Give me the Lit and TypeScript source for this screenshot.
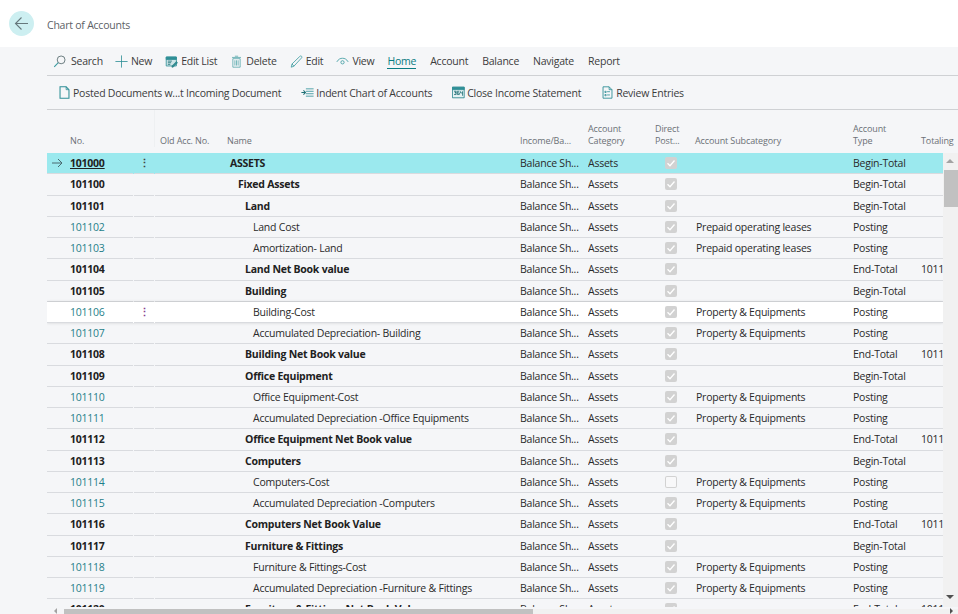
import { css, html, LitElement, svg } from 'lit';
import { customElement } from 'lit/decorators.js';

type Row = {
  no: string;
  name: string;
  level: number;
  type: string;
  sub?: string;
  total?: string;
  unchecked?: boolean;
};

const PROP = 'Property & Equipments';
const LEASE = 'Prepaid operating leases';

const rows: Row[] = [
  { no: '101000', name: 'ASSETS', level: 0, type: 'Begin-Total' },
  { no: '101100', name: 'Fixed Assets', level: 1, type: 'Begin-Total' },
  { no: '101101', name: 'Land', level: 2, type: 'Begin-Total' },
  { no: '101102', name: 'Land Cost', level: 3, type: 'Posting', sub: LEASE },
  { no: '101103', name: 'Amortization- Land', level: 3, type: 'Posting', sub: LEASE },
  { no: '101104', name: 'Land Net Book value', level: 2, type: 'End-Total', total: '1011' },
  { no: '101105', name: 'Building', level: 2, type: 'Begin-Total' },
  { no: '101106', name: 'Building-Cost', level: 3, type: 'Posting', sub: PROP },
  { no: '101107', name: 'Accumulated Depreciation- Building', level: 3, type: 'Posting', sub: PROP },
  { no: '101108', name: 'Building Net Book value', level: 2, type: 'End-Total', total: '1011' },
  { no: '101109', name: 'Office Equipment', level: 2, type: 'Begin-Total' },
  { no: '101110', name: 'Office Equipment-Cost', level: 3, type: 'Posting', sub: PROP },
  { no: '101111', name: 'Accumulated Depreciation -Office Equipments', level: 3, type: 'Posting', sub: PROP },
  { no: '101112', name: 'Office Equipment Net Book value', level: 2, type: 'End-Total', total: '1011' },
  { no: '101113', name: 'Computers', level: 2, type: 'Begin-Total' },
  { no: '101114', name: 'Computers-Cost', level: 3, type: 'Posting', sub: PROP, unchecked: true },
  { no: '101115', name: 'Accumulated Depreciation -Computers', level: 3, type: 'Posting', sub: PROP },
  { no: '101116', name: 'Computers Net Book Value', level: 2, type: 'End-Total', total: '1011' },
  { no: '101117', name: 'Furniture & Fittings', level: 2, type: 'Begin-Total' },
  { no: '101118', name: 'Furniture & Fittings-Cost', level: 3, type: 'Posting', sub: PROP },
  { no: '101119', name: 'Accumulated Depreciation -Furniture & Fittings', level: 3, type: 'Posting', sub: PROP },
  { no: '101120', name: 'Furniture & Fittings Net Book Value', level: 2, type: 'End-Total', total: '1011' },
];

const icon = (body: unknown) =>
  html`<svg class="ico" viewBox="0 0 16 16" fill="none" stroke="#2f8f96" stroke-width="1">${body}</svg>`;

const icons = {
  search: svg`<circle cx="10" cy="6" r="4.800" stroke="#4f6468"/><path d="M6.500 9.500 1.500 14.500" stroke="#3a9a9f" stroke-width="1.300"/>`,
  plus: svg`<path d="M8 .5v15M.5 8h15"/>`,
  editList: svg`<path d="M1.500 2.500h12.500v11H1.500z" fill="#cfe6e8"/><path d="M1.500 2.500h12.500v3H1.500z" fill="#2f8f96"/><path d="M3.500 7.500h5M3.500 9.500h4M3.500 11.500h3" stroke="#1f6f75"/><path d="m8.500 13.500 5.500-5.500 1.500 1.500-5.500 5.500H8.500z" fill="#2f8f96" stroke="#1f6f75" stroke-width=".6"/>`,
  trash: svg`<path d="M3.500 4.500h9v10.500h-9zM2.500 3h11M6 1.500h4M6 6.500v6.500M8 6.500v6.500M10 6.500v6.500" stroke="#5aa9ad"/>`,
  pencil: svg`<path d="M1.500 15 2.500 11 12 1.800c.8-.8 1.600-.8 2.200-.2.600.6.600 1.400-.2 2.200L4.800 13.800z" stroke="#3a9a9f"/><path d="m2.500 11 2.300 2.800" stroke="#3a9a9f"/>`,
  eye: svg`<path d="M1 8.500C3 5 5.500 4 8 4s5 1 7 4.500" stroke="#3a9a9f"/><circle cx="8" cy="9" r="2" stroke="#3a9a9f"/>`,
  doc: svg`<path d="M2.500 1h7.500l3.500 3.500V15H2.500z" stroke="#2f8f96" stroke-width="1.300"/><path d="M10 1v3.500h3.500" stroke="#2f8f96"/>`,
  indent: svg`<path d="M6 3.500h9.500M6 6.500h9.500M6 9.500h9.500M6 12.500h9.500" stroke="#2f8f96"/><path d="M.5 8h4.500M3 5.500 5.500 8 3 10.500" stroke="#1f6f75" stroke-width="1.300"/>`,
  close: svg`<path d="M.5 1.500h14.500v13H.5z" fill="#e6f3f4" stroke="#1f7f86"/><path d="M.5 1.500h14.500v3H.5z" fill="#2f8f96"/><path d="M2.500 6.500h2.500v1.700H3.500h1.500v2.300H2.500M6.500 6.500h2.500M6.500 6.500v4h2.500v-2H6.500M10.500 6.500v2h2.500M13 6.500v5.500" stroke="#1f6f75"/>`,
  review: svg`<path d="M2.500 1h7.500l3.500 3.500V15H2.500z" stroke="#2f8f96" stroke-width="1.100"/><path d="M10 1v3.500h3.500M7.500 7H11M7.500 11H11M4.800 6.500h1.500V8H4.800zM4.800 10.500h1.500V12H4.800z" stroke="#2f8f96"/>`,
};

const check = svg`<path d="M2.500 6.200 5 8.700l4.500-5.200" fill="none" stroke="#fff" stroke-width="1.300"/>`;

@customElement('app-root')
export class AppRoot extends LitElement {
  static styles = css`
    :host {
      display: flex;
      flex-direction: column;
      height: 614px;
      overflow: hidden;
      background: #f5f6f8;
      color: #2a2a2a;
      font-family: 'Open Sans', 'Noto Sans', sans-serif;
      font-size: 10.5px;
      letter-spacing: -0.23px;
    }

    .top {
      height: 47px;
      flex: none;
      background: #fff;
      display: flex;
      align-items: center;
      gap: 13px;
      padding: 0 0 1px 9px;
      box-sizing: border-box;
    }

    .back {
      width: 25px;
      height: 25px;
      border-radius: 50%;
      background: #cdeff1;
      display: flex;
      align-items: center;
      justify-content: center;
    }

    .back svg {
      width: 15px;
      height: 15px;
    }

    .title {
      color: #5c6166;
      padding-top: 4px;
    }

    .main {
      flex: 1;
      min-height: 0;
      display: flex;
      flex-direction: column;
      padding-left: 47px;
    }

    .bar {
      flex: none;
      display: flex;
      align-items: center;
      border-bottom: 1px solid #cfd1d4;
      box-sizing: border-box;
      color: #3c3c3c;
    }

    .bar.one {
      height: 29px;
      padding-left: 6px;
    }

    .bar.two {
      height: 34px;
      padding-left: 11px;
    }

    .act {
      display: flex;
      align-items: center;
      gap: 3px;
      white-space: nowrap;
    }

    .ico {
      width: 13px;
      height: 13px;
      flex: none;
    }

    .one .act {
      margin-right: 13px;
    }

    .one .act.search {
      gap: 5px;
      margin-right: 12px;
    }

    .two .act {
      margin-right: 20px;
      gap: 2px;
    }

    .tab {
      margin-right: 14px;
      line-height: 14px;
    }

    .tab.on {
      color: #0a7c82;
      border-bottom: 1px solid #0a7c82;
    }

    .grid {
      display: grid;
      grid-template-columns: 23px 63px 22px 72px 293px 68px 67px 40px 158px 68px 22px;
    }

    .head {
      flex: none;
      height: 43px;
      box-sizing: border-box;
      color: #6b7076;
      font-size: 9px;
      letter-spacing: -0.12px;
      line-height: 12px;
      align-items: end;
      padding-bottom: 6px;
      margin-right: 15px;
    }

    .head > div {
      white-space: nowrap;
    }

    .head .old {
      padding-left: 5px;
      box-shadow: -1px 0 0 #eef0f2;
      align-self: stretch;
      display: flex;
      align-items: flex-end;
    }

    .body {
      flex: 1;
      min-height: 0;
      display: flex;
    }

    .rows {
      flex: 1;
      min-width: 0;
      overflow: hidden;
    }

    .row {
      height: 21.25px;
    }

    .row > div {
      border-bottom: 1px solid #d9dbdf;
      box-sizing: border-box;
      display: flex;
      align-items: center;
      overflow: hidden;
      white-space: nowrap;
      min-width: 0;
    }

    .row .more {
      margin: 0 1px;
      justify-content: center;
      font-weight: 700;
      color: #444;
    }

    .row .name {
      padding-left: 3px;
    }

    .row .sub {
      padding-left: 1px;
    }

    .row .no {
      color: #1f7f8a;
    }

    .row.bold .no,
    .row.bold .name {
      font-weight: 700;
      color: #212121;
    }

    .row.sel {
      background: #9be9ee;
    }

    .row.sel .no {
      text-decoration: underline;
    }

    .row.hover {
      background: #fff;
      box-shadow: 0 0 3px rgba(0, 0, 0, 0.15);
      position: relative;
    }

    .row.hover .more {
      color: #8a3f8f;
    }

    .indent {
      flex: none;
    }

    .arrow svg {
      width: 12px;
      height: 12px;
      margin-left: 4px;
    }

    .chk {
      padding-left: 10px;
    }

    .box {
      width: 12px;
      height: 12px;
      border-radius: 2px;
      background: #d2d2d2;
      display: block;
    }

    .box.off {
      background: #f8f8f9;
      box-shadow: inset 0 0 0 1px #d2d2d2;
    }

    .vbar {
      width: 15px;
      flex: none;
      background: #f1f1f1;
      position: relative;
    }

    .thumb {
      position: absolute;
      left: 1px;
      right: 0;
      top: 17px;
      height: 37px;
      background: #c1c1c1;
    }

    .up,
    .down {
      position: absolute;
      left: 3px;
      width: 0;
      height: 0;
      border-left: 4px solid transparent;
      border-right: 4px solid transparent;
    }

    .up {
      top: 6px;
      border-bottom: 4px solid #a3a3a3;
    }

    .down {
      bottom: 8px;
      border-top: 4px solid #505050;
    }

    .hbar {
      flex: none;
      height: 7px;
      display: flex;
      align-items: flex-end;
      position: relative;
    }

    .htrack {
      flex: 1;
      height: 5px;
      background: #f1f1f1;
    }

    .hthumb {
      margin-left: 17px;
      width: 469px;
      height: 5px;
      background: #c1c1c1;
    }

    .left {
      position: absolute;
      left: 7px;
      bottom: 0;
      border-top: 3px solid transparent;
      border-bottom: 3px solid transparent;
      border-right: 3px solid #a3a3a3;
    }

    .right {
      position: absolute;
      right: 5px;
      bottom: 0;
      border-top: 3px solid transparent;
      border-bottom: 3px solid transparent;
      border-left: 3px solid #505050;
    }
  `;

  renderRow(r: Row, i: number) {
    const bold = r.level < 3;
    const cls = `row grid ${bold ? 'bold' : ''} ${i === 0 ? 'sel' : ''} ${r.no === '101106' ? 'hover' : ''}`;
    const indent = [0, 8, 15, 23][r.level];
    return html`<div class=${cls}>
      <div class="arrow">
        ${i === 0
          ? html`<svg viewBox="0 0 12 12" fill="none" stroke="#4a6a70"><path d="M1 6h10M7 2l4 4-4 4" /></svg>`
          : ''}
      </div>
      <div class="no">${r.no}</div>
      <div class="more">${i === 0 || r.no === '101106' ? '⋮' : ''}</div>
      <div></div>
      <div class="name"><span class="indent" style="width:${indent}px"></span>${r.name}</div>
      <div>Balance Sh...</div>
      <div>Assets</div>
      <div class="chk">
        <svg class="box ${r.unchecked ? 'off' : ''}" viewBox="0 0 12 12">${r.unchecked ? '' : check}</svg>
      </div>
      <div class="sub">${r.sub ?? ''}</div>
      <div>${r.type}</div>
      <div>${r.total ?? ''}</div>
    </div>`;
  }

  render() {
    return html`
      <div class="top">
        <div class="back">
          <svg viewBox="0 0 15 15" fill="none" stroke="#66787c" stroke-width="1.100">
            <path d="M14 7.500H1.500M7.500 1.500l-6 6 6 6" />
          </svg>
        </div>
        <div class="title">Chart of Accounts</div>
      </div>
      <div class="main">
        <div class="bar one">
          <div class="act search">${icon(icons.search)}Search</div>
          <div class="act">${icon(icons.plus)}New</div>
          <div class="act">${icon(icons.editList)}Edit List</div>
          <div class="act">${icon(icons.trash)}Delete</div>
          <div class="act">${icon(icons.pencil)}Edit</div>
          <div class="act">${icon(icons.eye)}View</div>
          <div class="tab on">Home</div>
          <div class="tab">Account</div>
          <div class="tab">Balance</div>
          <div class="tab">Navigate</div>
          <div class="tab">Report</div>
        </div>
        <div class="bar two">
          <div class="act">${icon(icons.doc)}Posted Documents w...t Incoming Document</div>
          <div class="act">${icon(icons.indent)}Indent Chart of Accounts</div>
          <div class="act">${icon(icons.close)}Close Income Statement</div>
          <div class="act">${icon(icons.review)}Review Entries</div>
        </div>
        <div class="head grid">
          <div></div>
          <div>No.</div>
          <div></div>
          <div class="old">Old Acc. No.</div>
          <div>Name</div>
          <div>Income/Ba...</div>
          <div>Account<br />Category</div>
          <div>Direct<br />Post...</div>
          <div>Account Subcategory</div>
          <div>Account<br />Type</div>
          <div>Totaling</div>
        </div>
        <div class="body">
          <div class="rows">${rows.map((r, i) => this.renderRow(r, i))}</div>
          <div class="vbar">
            <div class="up"></div>
            <div class="thumb"></div>
            <div class="down"></div>
          </div>
        </div>
        <div class="hbar">
          <div class="left"></div>
          <div class="hthumb"></div>
          <div class="htrack"></div>
          <div class="right"></div>
        </div>
      </div>
    `;
  }
}
